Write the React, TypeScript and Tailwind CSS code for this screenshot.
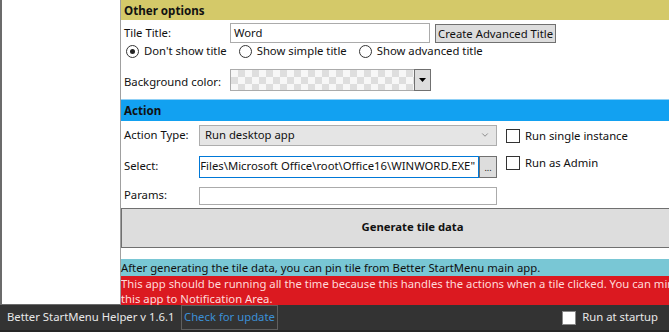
import { ChevronDown } from 'lucide-react'

const font = 'font-["Noto_Sans","Open_Sans",sans-serif]'

function Radio({ checked, label }: { checked?: boolean; label: string }) {
  return (
    <label className="flex items-center gap-[5px]">
      <span className="w-[13px] h-[13px] rounded-full border border-[#333] bg-white flex items-center justify-center">
        {checked && <span className="w-[5px] h-[5px] rounded-full bg-[#222]" />}
      </span>
      <span>{label}</span>
    </label>
  )
}

function Check({ label }: { label: string }) {
  return (
    <label className="flex items-center gap-[5px]">
      <span className="w-[14px] h-[14px] border border-[#333] bg-white" />
      <span>{label}</span>
    </label>
  )
}

export default function App() {
  return (
    <div className={`w-[669px] h-[332px] overflow-hidden flex flex-col bg-white text-[11.3px] text-[#111] ${font}`}>
      <div className="flex h-[305px]">
        {/* left list panel */}
        <div className="w-[121px] flex-shrink-0 bg-white border-l-2 border-b border-r border-[#6b6b6b] border-r-[#a0a0a0]" />

        {/* main content */}
        <div className="flex-1 min-w-0 flex flex-col">
          {/* Other options */}
          <div className="h-[21px] bg-[#d4c969] pl-[3px] flex items-center font-bold text-[11.6px]">Other options</div>

          <div className="flex items-start mt-[3px] h-[20px]">
            <span className="w-[109px] pl-[3px] pt-[2px]">Tile Title:</span>
            <div className="w-[200px] h-[20px] border border-[#ababab] px-[3px] flex items-center">Word</div>
            <button className="ml-[5px] mt-[1px] h-[19px] px-[2px] bg-[#dddddd] border border-[#707070] flex items-center leading-none">
              Create Advanced Title
            </button>
          </div>

          <div className="flex items-center gap-[12px] pl-[5px] h-[15px] mt-[1px]">
            <Radio checked label="Don't show title" />
            <Radio label="Show simple title" />
            <Radio label="Show advanced title" />
          </div>

          <div className="flex items-center mt-[10px] h-[22px]">
            <span className="w-[109px] pl-[3px] pt-[4px]">Background color:</span>
            <div className="w-[184px] h-[22px] border border-[#ababab] border-r-0 bg-[repeating-conic-gradient(#dedede_0%_25%,#f7f7f7_0%_50%)] bg-[length:14px_14px]" />
            <div className="w-[17px] h-[22px] bg-[#dddddd] border border-[#707070] flex items-center justify-center">
              <svg width="7" height="4" viewBox="0 0 7 4"><path d="M0 0h7L3.5 4z" fill="#000" /></svg>
            </div>
          </div>

          {/* Action */}
          <div className="mt-[8px] h-[22px] bg-[#12a1f1] border-t border-[#8fd0f6] pl-[3px] flex items-center font-bold text-[11.6px]">Action</div>

          <div className="flex">
            <div className="w-[376px] flex-shrink-0">
              <div className="flex items-center mt-[4px] h-[21px]">
                <span className="w-[78px] pl-[3px]">Action Type:</span>
                <div className="w-[298px] h-[21px] bg-[#e5e5e5] border border-[#adadad] pl-[5px] pr-[6px] flex items-center justify-between">
                  <span>Run desktop app</span>
                  <ChevronDown size={10} strokeWidth={1.5} className="text-[#555]" />
                </div>
              </div>
              <div className="flex items-center mt-[10px] h-[22px]">
                <span className="w-[78px] pl-[3px]">Select:</span>
                <div className="w-[280px] h-[22px] border border-[#0078d7] pr-[3px] flex items-center justify-end overflow-hidden whitespace-nowrap">
                  <span className="flex-shrink-0">Files\Microsoft Office\root\Office16\WINWORD.EXE"</span>
                </div>
                <div className="w-[18px] h-[22px] bg-[#dddddd] border border-[#707070] flex items-end justify-center pb-[5px] text-[9px] leading-none">...</div>
              </div>
              <div className="flex items-center mt-[9px] h-[18px]">
                <span className="w-[78px] pl-[3px]">Params:</span>
                <div className="w-[298px] h-[18px] border border-[#ababab]" />
              </div>
            </div>
            <div className="pl-[9px] pt-[7px] flex flex-col gap-[10px]">
              <Check label="Run single instance" />
              <Check label="Run as Admin" />
            </div>
          </div>

          <button className="mt-[3px] h-[40px] w-[582px] flex-shrink-0 bg-[#dddddd] border border-[#707070] border-r-0 font-bold flex items-center justify-center">
            Generate tile data
          </button>

          <div className="mt-[11px] h-[17px] bg-[#79c7d5] whitespace-nowrap leading-[17px] text-[#111]">
            After generating the tile data, you can pin tile from Better StartMenu main app.
          </div>
          <div className="h-[30px] bg-[#db1920] text-[#ffd9d9] leading-[15px] whitespace-nowrap overflow-hidden">
            <div>This app should be running all the time because this handles the actions when a tile clicked. You can minimize</div>
            <div>this app to Notification Area.</div>
          </div>
        </div>
      </div>

      {/* status bar */}
      <div className="h-[27px] bg-[#333333] border-b-2 border-[#262626] flex items-center text-[#e8e8e8] whitespace-nowrap">
        <span className="pl-[7px] w-[181px]">Better StartMenu Helper v 1.6.1</span>
        <span className="h-[25px] px-[2px] border border-[#5f5f5f] text-[#3b8fd6] flex items-center">Check for update</span>
        <div className="ml-auto mr-[11px] flex items-center gap-[5px]">
          <span className="w-[14px] h-[14px] bg-white border border-[#888]" />
          <span className="ml-[1px]">Run at startup</span>
        </div>
      </div>
    </div>
  )
}
